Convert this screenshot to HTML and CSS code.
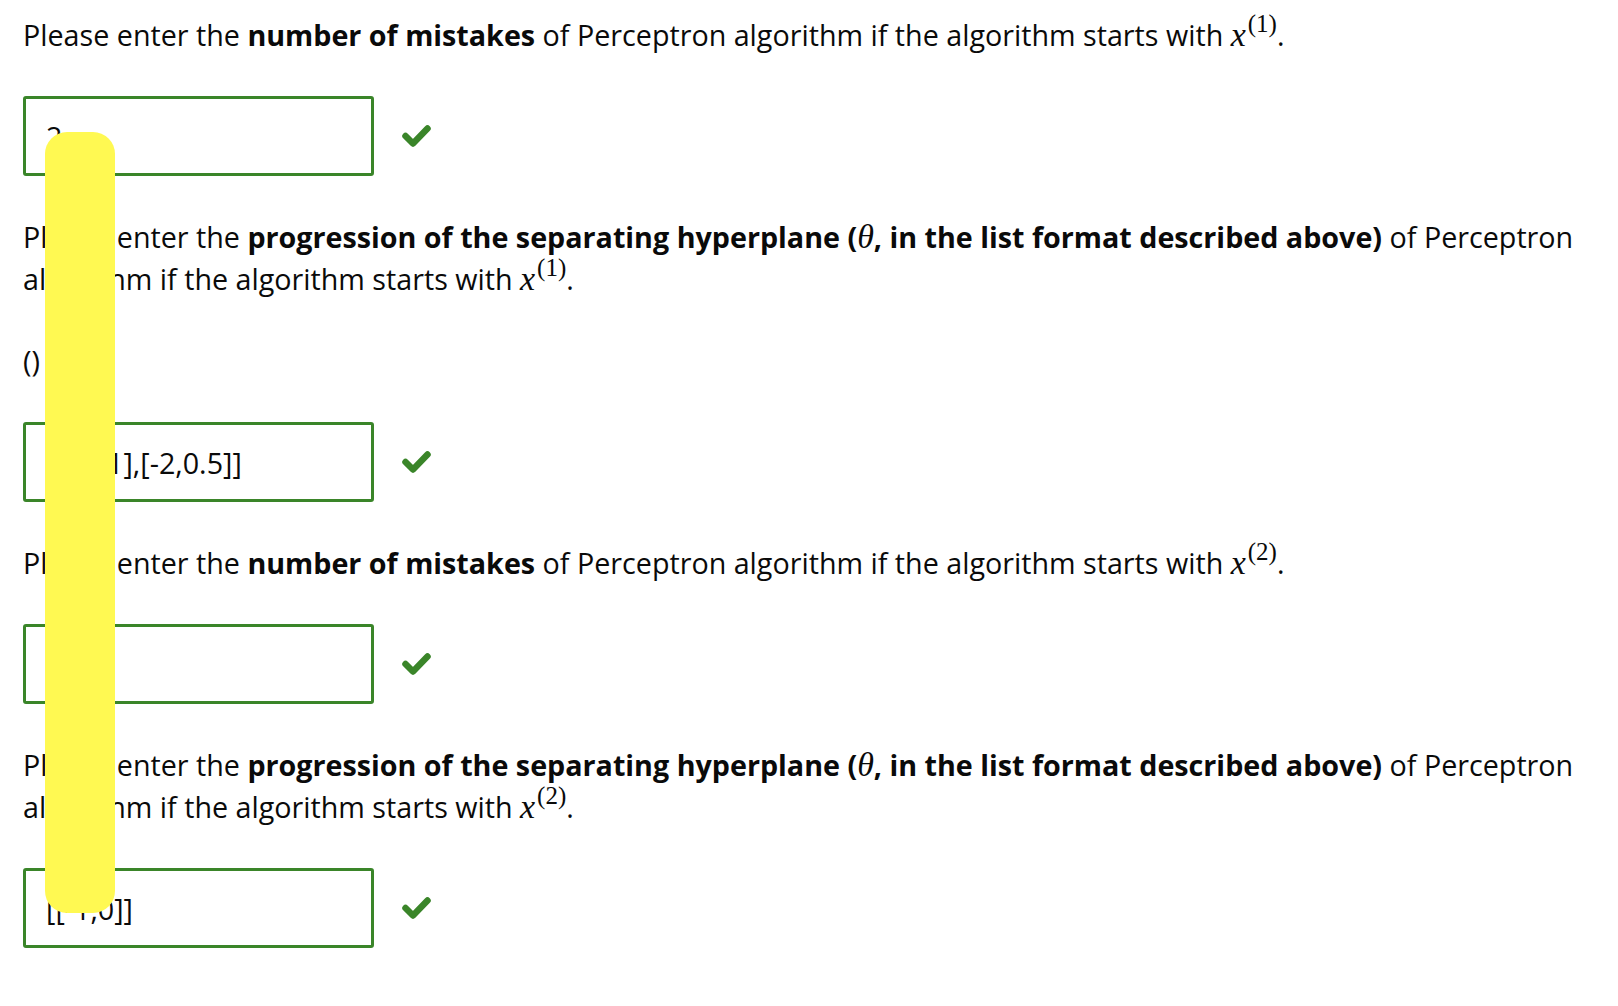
FILE: index.html
```html
<!doctype html>
<html>
    <head>
        <meta charset="utf-8" />
        <title>Perceptron mistakes</title>
        <link rel="stylesheet" href="styles.css">
    </head>
    <body>
        <div class="problem">
            <p>
                Please enter the <strong>number of mistakes</strong> of
                Perceptron algorithm if the algorithm starts with
                <span class="math"><i>x</i><sup>(1)</sup></span>.
            </p>
            <div class="answer">
                <input type="text" class="field correct" value="2" />
                <svg class="check" viewBox="0 0 29 22"><polyline points="3.5,11 11,18.5 25.5,3.5" /></svg>
            </div>
            <p>
                Please enter the <strong>progression of the separating
                hyperplane (<span class="math"><i>θ</i></span>, in the list
                format described above)</strong> of Perceptron algorithm if
                the algorithm starts with
                <span class="math"><i>x</i><sup>(1)</sup></span>.
            </p>
            <p>()</p>
            <div class="answer">
                <input type="text" class="field correct" value="[[-1,-1],[-2,0.5]]" />
                <svg class="check" viewBox="0 0 29 22"><polyline points="3.5,11 11,18.5 25.5,3.5" /></svg>
            </div>
            <p>
                Please enter the <strong>number of mistakes</strong> of
                Perceptron algorithm if the algorithm starts with
                <span class="math"><i>x</i><sup>(2)</sup></span>.
            </p>
            <div class="answer">
                <input type="text" class="field correct" value="1" />
                <svg class="check" viewBox="0 0 29 22"><polyline points="3.5,11 11,18.5 25.5,3.5" /></svg>
            </div>
            <p>
                Please enter the <strong>progression of the separating
                hyperplane (<span class="math"><i>θ</i></span>, in the list
                format described above)</strong> of Perceptron algorithm if
                the algorithm starts with
                <span class="math"><i>x</i><sup>(2)</sup></span>.
            </p>
            <div class="answer">
                <input type="text" class="field correct" value="[[-1,0]]" />
                <svg class="check" viewBox="0 0 29 22"><polyline points="3.5,11 11,18.5 25.5,3.5" /></svg>
            </div>
            <div class="marker"></div>
        </div>
    </body>
</html>
```

FILE: styles.css
```css
body {
    margin: 0;
    font-family: "Open Sans", sans-serif;
    font-size: 28.7px;
    line-height: 42px;
    color: #0a0a0a;
    background: #fff;
}
.problem {
    position: relative;
    display: flex;
    flex-direction: column;
    gap: 40px;
    padding: 14px 23px 40px;
}
p {
    margin: 0;
}
strong {
    font-weight: 700;
}
.math {
    font-family: "Liberation Serif", serif;
    font-size: 34px;
    font-weight: normal;
}
.math sup {
    margin-left: 2px;
    font-size: 25px;
    line-height: 0;
    vertical-align: 14px;
}
.answer {
    display: flex;
    align-items: center;
    gap: 28px;
}
.field {
    box-sizing: border-box;
    width: 351px;
    height: 80px;
    margin: 0;
    padding: 0 20px;
    border: 3px solid #3a8529;
    border-radius: 3px;
    font-family: "Open Sans", sans-serif;
    font-size: 28.7px;
    color: #0a0a0a;
    background: #fff;
    outline: none;
}
.check {
    width: 29px;
    height: 22px;
    fill: none;
    stroke: #3a8529;
    stroke-width: 6.5;
    stroke-linecap: round;
    stroke-linejoin: round;
}
.marker {
    position: absolute;
    left: 45px;
    top: 132px;
    width: 70px;
    height: 781px;
    border-radius: 22px;
    background: #fff952;
}
```
